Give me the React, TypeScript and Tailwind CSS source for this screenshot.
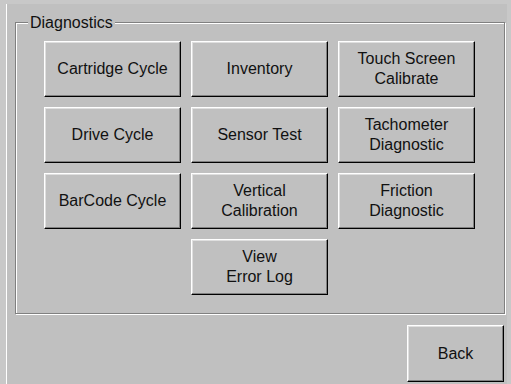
const buttons: (string[] | null)[] = [
  ["Cartridge Cycle"],
  ["Inventory"],
  ["Touch Screen", "Calibrate"],
  ["Drive Cycle"],
  ["Sensor Test"],
  ["Tachometer", "Diagnostic"],
  ["BarCode Cycle"],
  ["Vertical", "Calibration"],
  ["Friction", "Diagnostic"],
  null,
  ["View", "Error Log"],
  null,
];

function WinButton({ lines, className }: { lines: string[]; className: string }) {
  return (
    <button
      className={`flex flex-col items-center justify-center bg-[#c0c0c0] border border-t-white border-l-white border-r-black border-b-black shadow-[inset_-1px_-1px_0_#808080,inset_1px_1px_0_#dfdfdf] text-[16px] leading-[20px] text-[#111] ${className}`}
    >
      {lines.map((l) => (
        <span key={l}>{l}</span>
      ))}
    </button>
  );
}

export default function App() {
  return (
    <div
      className="w-[511px] h-[384px] bg-[#c8c8c8] pt-[4px] pl-[6px] overflow-hidden"
      style={{ fontFamily: '"Liberation Sans", Arial, sans-serif' }}
    >
      <div className="w-[501px] h-[380px] bg-[#c0c0c0] border-l border-white flex flex-col pl-[8px] pr-[2px]">
        <div className="relative mt-[18px] h-[292px] border border-[#808080] shadow-[inset_1px_1px_0_#fff,1px_1px_0_#fff]">
          <span className="absolute left-[12px] top-[-10px] bg-[#c0c0c0] px-[2px] text-[16px] leading-[20px] text-[#111]">
            Diagnostics
          </span>
          <div className="grid grid-cols-[137px_137px_137px] grid-rows-[56px_56px_56px_56px] gap-[10px] ml-[28px] mt-[18px]">
            {buttons.map((b, i) =>
              b ? <WinButton key={i} lines={b} className="w-[137px] h-[56px]" /> : <div key={i} />
            )}
          </div>
        </div>
        <div className="flex justify-end mt-[11px]">
          <WinButton lines={["Back"]} className="w-[97px] h-[57px] mr-[1px]" />
        </div>
      </div>
    </div>
  );
}
